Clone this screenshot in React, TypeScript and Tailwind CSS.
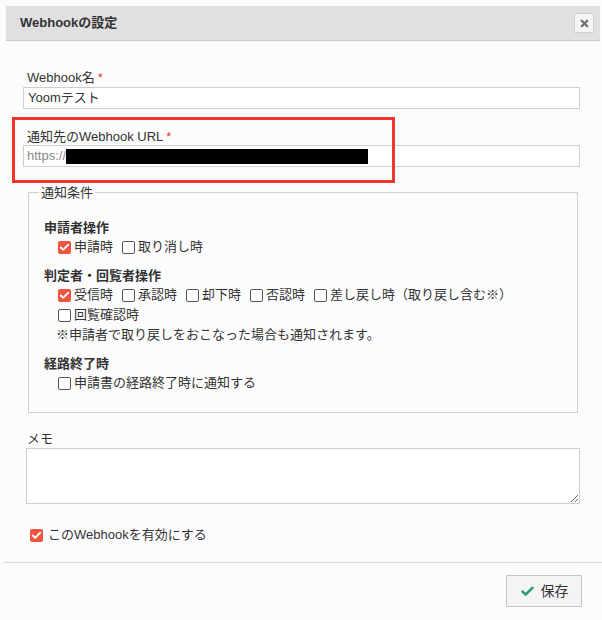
import React from 'react';
import { Check, X } from 'lucide-react';

const fontStack = { fontFamily: '"Liberation Sans", "Noto Sans CJK JP", sans-serif' };

const Box: React.FC<{ checked?: boolean }> = ({ checked }) =>
  checked ? (
    <span className="flex items-center justify-center w-[13px] h-[13px] rounded-[2px] bg-[#f2553f] shrink-0">
      <Check className="w-[11px] h-[11px] text-white" strokeWidth={4} />
    </span>
  ) : (
    <span className="w-[13px] h-[13px] rounded-[2px] border border-[#555] bg-white shrink-0" />
  );

const Option: React.FC<{ label: string; checked?: boolean }> = ({ label, checked }) => (
  <span className="flex items-center gap-[3px]">
    <Box checked={checked} />
    <span>{label}</span>
  </span>
);

const Required = () => <span className="text-[#e0433a] ml-[3px]">*</span>;

const App: React.FC = () => {
  return (
    <div className="relative w-[602px] h-[620px] bg-[#fdfcfd] text-[13px] text-[#333] overflow-hidden" style={fontStack}>
      {/* header */}
      <div className="ml-[6px] mr-[2px] mt-[6px] h-[35px] bg-[#e0dfe2] border-b border-[#cbcacd] flex items-center justify-between pl-[14px] pr-[6px]">
        <span className="font-bold text-[13px] text-[#333]">Webhookの設定</span>
        <button className="w-[20px] h-[20px] bg-[#f4f3f5] border border-[#cfcfcf] flex items-center justify-center">
          <X className="w-[11px] h-[11px] text-[#6f6f6f]" strokeWidth={5} />
        </button>
      </div>

      <div className="pl-[23px] pr-[22px]">
        <div className="mt-[28px] h-[18px] leading-[18px] pl-[4px]">
          Webhook名<Required />
        </div>
        <div className="h-[22px] border border-[#cfcfd2] bg-white flex items-center pl-[4px]">Yoomテスト</div>

        <div className="mt-[19px] h-[17px] leading-[17px] pl-[4px]">
          通知先のWebhook URL<Required />
        </div>
        <div className="h-[22px] border border-[#cfcfd2] bg-white flex items-center pl-[3px]">
          <span className="text-[#8a8a8a]">https://</span>
          <span className="w-[302px] h-[15px] bg-black" />
        </div>

        <fieldset className="mt-[17px] ml-[5px] mr-[2px] border border-[#cfcfd2] px-[15px] pb-[19px]">
          <legend className="-ml-[5px] px-[2px] leading-[17px]">通知条件</legend>
          <div className="pt-[18px]">
            <div className="font-bold h-[18px] leading-[18px]">申請者操作</div>
            <div className="h-[20px] flex items-center gap-[9px] pl-[14px]">
              <Option label="申請時" checked />
              <Option label="取り消し時" />
            </div>

            <div className="mt-[10px] font-bold h-[18px] leading-[18px]">判定者・回覧者操作</div>
            <div className="h-[20px] flex items-center gap-[9px] pl-[14px]">
              <Option label="受信時" checked />
              <Option label="承認時" />
              <Option label="却下時" />
              <Option label="否認時" />
              <Option label="差し戻し時（取り戻し含む※）" />
            </div>
            <div className="h-[20px] flex items-center gap-[9px] pl-[14px]">
              <Option label="回覧確認時" />
            </div>
            <div className="h-[20px] leading-[20px] pl-[12px]">※申請者で取り戻しをおこなった場合も通知されます。</div>

            <div className="mt-[10px] font-bold h-[18px] leading-[18px]">経路終了時</div>
            <div className="h-[20px] flex items-center gap-[9px] pl-[14px]">
              <Option label="申請書の経路終了時に通知する" />
            </div>
          </div>
        </fieldset>

        <div className="mt-[17px] h-[18px] leading-[18px] pl-[4px]">メモ</div>
        <textarea
          className="block ml-[3px] w-[554px] h-[56px] border border-[#cfcfd2] bg-white outline-none"
          defaultValue=""
        />

        <div className="mt-[21px] h-[20px] flex items-center gap-[5px] pl-[7px]">
          <Box checked />
          <span>このWebhookを有効にする</span>
        </div>
      </div>

      <div className="mt-[17px] ml-[3px] border-t border-[#dcdcdc]" />

      <div className="flex justify-end pr-[20px] pt-[12px]">
        <button className="w-[76px] h-[32px] bg-[#f4f3f6] border border-[#c6c6c9] flex items-center justify-center gap-[6px] text-[14px] text-[#333]">
          <Check className="w-[15px] h-[15px] text-[#2e9d6f]" strokeWidth={4} />
          保存
        </button>
      </div>

      {/* red annotation frame */}
      <div className="absolute left-[12px] top-[117px] w-[383px] h-[66px] border-[3px] border-[#f2352a] pointer-events-none" />
    </div>
  );
};

export default App;
